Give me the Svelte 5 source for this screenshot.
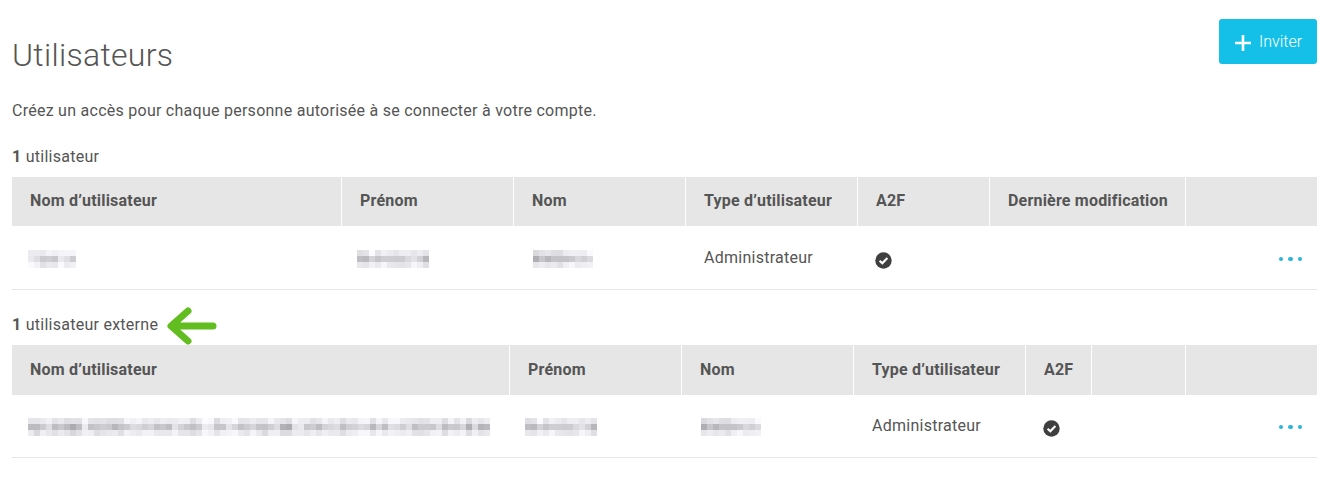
<script>
  function mosaic(width, seed) {
    const cells = [];
    const cols = Math.round(width / 6);
    const shade = (a) => {
      const v = Math.sin(a * 12.9898 + seed * 78.233) * 43758.5453;
      return v - Math.floor(v);
    };
    for (let r = 0; r < 3; r++) {
      for (let c = 0; c < cols; c++) {
        const n = 0.6 * shade(c + 101) + 0.4 * shade(r * 31 + c + 1);
        const base = r === 1 ? 168 : 214;
        const range = r === 1 ? 70 : 38;
        const g = Math.round(base + n * range);
        cells.push({ x: c * 6, y: r * 6, fill: `rgb(${g},${g},${Math.min(255, g + 4)})` });
      }
    }
    return cells;
  }
  const first = [
    { w: 48, seed: 11 }, { w: 74, seed: 23 }, { w: 60, seed: 37 }
  ];
  const second = [
    { w: 462, seed: 51 }, { w: 74, seed: 23 }, { w: 60, seed: 37 }
  ];
</script>

{#snippet blur(item)}
  <svg class="mosaic" width={item.w} height="18" viewBox="0 0 {item.w} 18" role="img" aria-label="Texte masqué">
    {#each mosaic(item.w, item.seed) as cell}
      <rect x={cell.x} y={cell.y} width="6" height="6" fill={cell.fill} />
    {/each}
  </svg>
{/snippet}

{#snippet check()}
  <svg class="check" width="17" height="17" viewBox="0 0 17 17" aria-hidden="true">
    <circle cx="8.5" cy="8.5" r="8.2" fill="#3f3f3f" />
    <path d="M4.6 8.8 7.3 11.3 12.4 6" fill="none" stroke="#fff" stroke-width="2.1" />
  </svg>
{/snippet}

{#snippet dots()}
  <span class="dots"><i></i><i></i><i></i></span>
{/snippet}

<main class="page">
  <header class="top">
    <h1>Utilisateurs</h1>
    <button class="invite">
      <svg width="18" height="18" viewBox="0 0 18 18" aria-hidden="true">
        <path d="M9 1v16M1 9h16" stroke="#fff" stroke-width="2.6" />
      </svg>
      Inviter
    </button>
  </header>
  <p class="intro">Créez un accès pour chaque personne autorisée à se connecter à votre compte.</p>

  <p class="count first"><b>1</b> utilisateur</p>
  <table class="users">
    <colgroup>
      <col class="c1" /><col class="c2" /><col class="c2" /><col class="c2" /><col class="c5" /><col class="c6" /><col />
    </colgroup>
    <thead>
      <tr>
        <th>Nom d’utilisateur</th><th>Prénom</th><th>Nom</th><th>Type d’utilisateur</th><th>A2F</th><th>Dernière modification</th><th></th>
      </tr>
    </thead>
    <tbody>
      <tr>
        <td class="masked">{@render blur(first[0])}</td>
        <td class="masked given">{@render blur(first[1])}</td>
        <td class="masked family">{@render blur(first[2])}</td>
        <td>Administrateur</td>
        <td class="a2f">{@render check()}</td>
        <td></td>
        <td class="more">{@render dots()}</td>
      </tr>
    </tbody>
  </table>

  <p class="count second">
    <b>1</b> utilisateur externe
    <svg class="arrow" width="52" height="40" viewBox="0 0 52 40" aria-hidden="true">
      <path d="M47 20H6M22 5 5 20 22 35" fill="none" stroke="#62bd20" stroke-width="7" stroke-linecap="round" stroke-linejoin="round" />
    </svg>
  </p>
  <table class="users ext">
    <colgroup>
      <col class="e1" /><col class="c2" /><col class="c2" /><col class="c2" /><col class="e5" /><col class="e6" /><col />
    </colgroup>
    <thead>
      <tr>
        <th>Nom d’utilisateur</th><th>Prénom</th><th>Nom</th><th>Type d’utilisateur</th><th>A2F</th><th></th><th></th>
      </tr>
    </thead>
    <tbody>
      <tr>
        <td class="masked">{@render blur(second[0])}</td>
        <td class="masked given">{@render blur(second[1])}</td>
        <td class="masked family">{@render blur(second[2])}</td>
        <td>Administrateur</td>
        <td class="a2f">{@render check()}</td>
        <td></td>
        <td class="more">{@render dots()}</td>
      </tr>
    </tbody>
  </table>
</main>

<style>
  :global(body) {
    margin: 0;
    background: #fff;
  }
  .page {
    padding: 19px 20px 0 12px;
    font-family: Roboto, "Liberation Sans", sans-serif;
    font-size: 16px;
    color: #555;
    letter-spacing: 0.26px;
  }
  .top {
    display: flex;
    justify-content: space-between;
    align-items: flex-start;
    height: 81px;
  }
  h1 {
    margin: 14px 0 0;
    font-size: 32px;
    line-height: 44px;
    font-weight: 300;
    letter-spacing: 0.3px;
    color: #555;
  }
  .invite {
    display: flex;
    align-items: center;
    gap: 7px;
    width: 98px;
    height: 45px;
    padding: 0 0 0 15px;
    border: 0;
    border-radius: 3px;
    background: #14c0e8;
    color: #fff;
    font: 300 16px Roboto, sans-serif;
    letter-spacing: 0;
  }
  .invite svg {
    margin-top: 2px;
  }
  .intro {
    margin: 0;
    line-height: 22px;
  }
  .count {
    margin: 0;
    line-height: 22px;
    height: 22px;
  }
  .count b {
    font-weight: 700;
  }
  .first {
    margin-top: 24px;
    margin-bottom: 9px;
  }
  .second {
    position: relative;
    margin-top: 24px;
    margin-bottom: 9px;
    display: block;
  }
  .arrow {
    position: absolute;
    left: 154px;
    top: -8px;
  }
  table {
    width: 1305px;
    table-layout: fixed;
    border-collapse: separate;
    border-spacing: 0;
  }
  .c1 { width: 330px; }
  .c2 { width: 172px; }
  .c5 { width: 132px; }
  .c6 { width: 196px; }
  .e1 { width: 498px; }
  .e5 { width: 66px; }
  .e6 { width: 94px; }
  th {
    height: 49px;
    padding: 0 0 2px 18px;
    box-sizing: border-box;
    background: #e6e6e6;
    border-right: 1px solid #fff;
    text-align: left;
    font-weight: 700;
    font-size: 16px;
    letter-spacing: 0.2px;
    white-space: nowrap;
  }
  th:last-child {
    border-right: 0;
  }
  .ext th {
    height: 50px;
    padding-bottom: 1px;
  }
  td {
    height: 64px;
    padding: 0 0 0 18px;
    box-sizing: border-box;
    border-bottom: 1px solid #e6e6e6;
    white-space: nowrap;
    vertical-align: middle;
  }
  .ext td {
    height: 63px;
    padding-bottom: 1px;
  }
  .masked {
    padding-left: 16px;
  }
  .given {
    padding-left: 15px;
  }
  .family {
    padding-left: 19px;
  }
  .mosaic {
    display: block;
    filter: blur(0.7px);
    margin-top: 2px;
  }
  .a2f {
    padding-left: 17px;
  }
  .check {
    display: block;
    margin-top: 6px;
  }
  .more {
    padding-right: 14px;
    text-align: right;
  }
  .dots {
    display: inline-flex;
    gap: 5px;
    margin-right: 1px;
    vertical-align: middle;
  }
  .dots i {
    display: block;
    width: 4.5px;
    height: 4.5px;
    border-radius: 50%;
    background: #27b6da;
  }
</style>
